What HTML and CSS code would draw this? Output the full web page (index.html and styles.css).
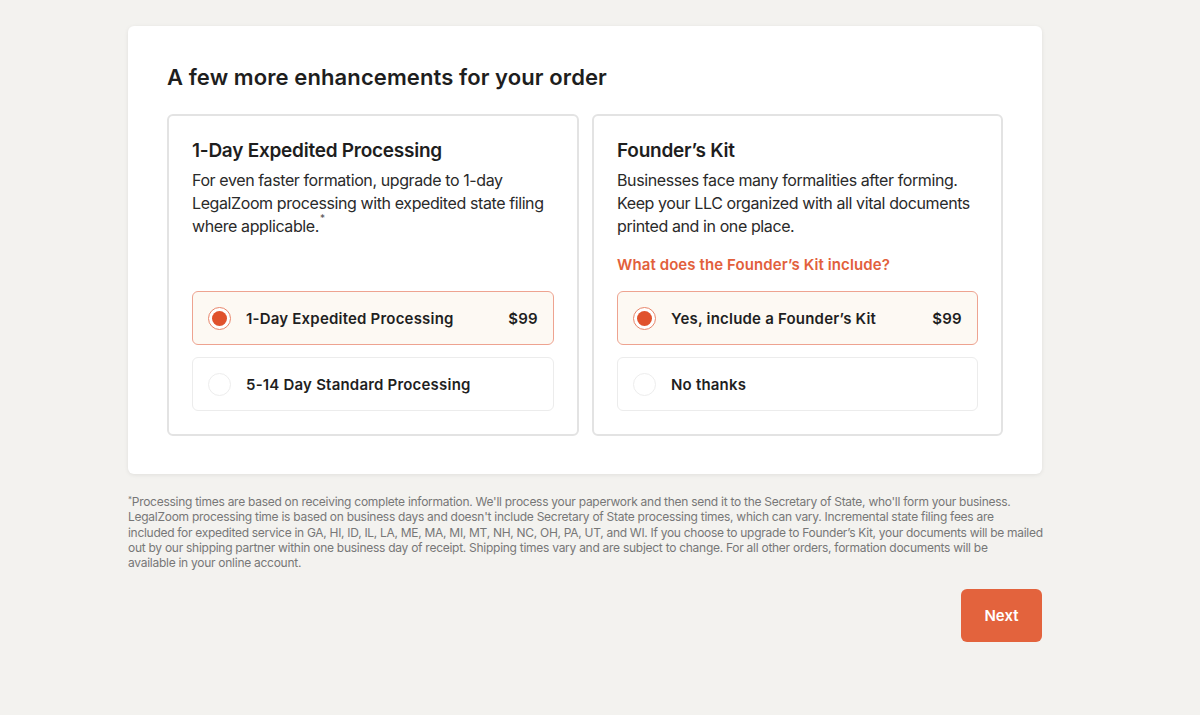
FILE: index.html
```html
<!DOCTYPE html>
<html lang="en">
<head>
<meta charset="utf-8">
<title>Enhancements</title>
<link rel="stylesheet" href="styles.css">
</head>
<body>
<div class="page">
  <section class="card">
    <h1 class="heading">A few more enhancements for your order</h1>
    <div class="panels">
      <div class="panel">
        <h2 class="panel-title">1-Day Expedited Processing</h2>
        <p class="panel-desc">For even faster formation, upgrade to 1-day LegalZoom processing with expedited state filing where applicable.<span class="star">*</span></p>
        <div class="options">
          <label class="option selected">
            <span class="radio"></span>
            <span class="opt-label">1-Day Expedited Processing</span>
            <span class="opt-price">$99</span>
          </label>
          <label class="option">
            <span class="radio"></span>
            <span class="opt-label">5-14 Day Standard Processing</span>
          </label>
        </div>
      </div>
      <div class="panel">
        <h2 class="panel-title">Founder’s Kit</h2>
        <p class="panel-desc">Businesses face many formalities after forming. Keep your LLC organized with all vital documents printed and in one place.</p>
        <a class="panel-link">What does the Founder’s Kit include?</a>
        <div class="options">
          <label class="option selected">
            <span class="radio"></span>
            <span class="opt-label">Yes, include a Founder’s Kit</span>
            <span class="opt-price">$99</span>
          </label>
          <label class="option">
            <span class="radio"></span>
            <span class="opt-label">No thanks</span>
          </label>
        </div>
      </div>
    </div>
  </section>
  <p class="footnote"><span class="fstar">*</span>Processing times are based on receiving complete information. We'll process your paperwork and then send it to the Secretary of State, who'll form your business.<br>LegalZoom processing time is based on business days and doesn't include Secretary of State processing times, which can vary. Incremental state filing fees are<br><span class="tight">included for expedited service in GA, HI, ID, IL, LA, ME, MA, MI, MT, NH, NC, OH, PA, UT, and WI. If you choose to upgrade to Founder’s Kit, your documents will be mailed</span><br>out by our shipping partner within one business day of receipt. Shipping times vary and are subject to change. For all other orders, formation documents will be<br>available in your online account.</p>
  <div class="actions">
    <button class="next">Next</button>
  </div>
</div>
</body>
</html>
```
FILE: styles.css
```css
* { box-sizing: border-box; }
html, body { margin: 0; padding: 0; }
body {
  background: #f3f2ef;
  font-family: Inter, "Noto Sans", sans-serif;
  color: #1f1f1f;
  width: 1200px;
  height: 715px;
  overflow: hidden;
}
.page {
  width: 914px;
  margin-left: 128px;
  padding-top: 26px;
}
.card {
  background: #fff;
  border-radius: 6px;
  box-shadow: 0 1px 4px rgba(0,0,0,0.08);
  padding: 37px 39px 38px 39px;
}
.heading {
  margin: 0 0 23px 0;
  font-size: 22px;
  line-height: 28px;
  font-weight: 600;
  color: #1e1e1e;
  letter-spacing: 0.1px;
}
.panels {
  display: grid;
  grid-template-columns: 412px 411px;
  gap: 13px;
}
.panel {
  border: 2px solid #e3e3e3;
  border-radius: 6px;
  padding: 23px 23px 23px 23px;
  display: flex;
  flex-direction: column;
}
.panel-title {
  margin: 0 0 6px 0;
  font-size: 19px;
  line-height: 24px;
  font-weight: 600;
  color: #1e1e1e;
  letter-spacing: -0.25px;
}
.panel-desc {
  margin: 0;
  font-size: 16px;
  line-height: 23px;
  color: #2a2a2a;
  letter-spacing: -0.4px;
}
.star {
  display: inline-block;
  font-size: 10px;
  line-height: 10px;
  vertical-align: top;
  margin-top: -2px;
  margin-left: 1px;
  color: #555;
}
.panel-link {
  display: block;
  margin-top: 17px;
  font-size: 15px;
  line-height: 20px;
  font-weight: 600;
  color: #e2603b;
  letter-spacing: 0.1px;
}
.options {
  margin-top: auto;
  display: flex;
  flex-direction: column;
  gap: 12px;
  padding-top: 16px;
}
.option {
  height: 54px;
  border: 1px solid #ececec;
  border-radius: 6px;
  display: flex;
  align-items: center;
  padding: 0 15px 0 15px;
  background: #fff;
}
.option.selected {
  background: #fdf9f3;
  border-color: #eea390;
}
.radio {
  width: 23px;
  height: 23px;
  border-radius: 50%;
  border: 1px solid #ededed;
  background: #fff;
  flex: none;
  margin-right: 15px;
  position: relative;
}
.option.selected .radio {
  border: 1px solid #e8856a;
  background: #fff;
}
.option.selected .radio::after {
  content: "";
  position: absolute;
  left: 3px; top: 3px;
  width: 15px; height: 15px;
  border-radius: 50%;
  background: #e0522d;
}
.opt-label {
  font-size: 15px;
  font-weight: 600;
  color: #1f1f1f;
  letter-spacing: 0.2px;
  flex: 1;
}
.opt-price {
  font-size: 15px;
  font-weight: 600;
  color: #1f1f1f;
  letter-spacing: 0.3px;
}
.footnote {
  margin: 20px 0 0 0;
  font-size: 12px;
  line-height: 15.25px;
  color: #777;
  letter-spacing: -0.27px;
  white-space: nowrap;
}
.tight { letter-spacing: -0.29px; }
.fstar {
  display: inline-block;
  font-size: 8px;
  line-height: 8px;
  vertical-align: top;
  margin-top: 1px;
}
.actions {
  display: flex;
  justify-content: flex-end;
  margin-top: 19px;
}
.next {
  width: 81px;
  height: 53px;
  border: none;
  border-radius: 6px;
  background: #e3633d;
  color: #fff;
  font-family: inherit;
  font-size: 15px;
  font-weight: 600;
}
```
